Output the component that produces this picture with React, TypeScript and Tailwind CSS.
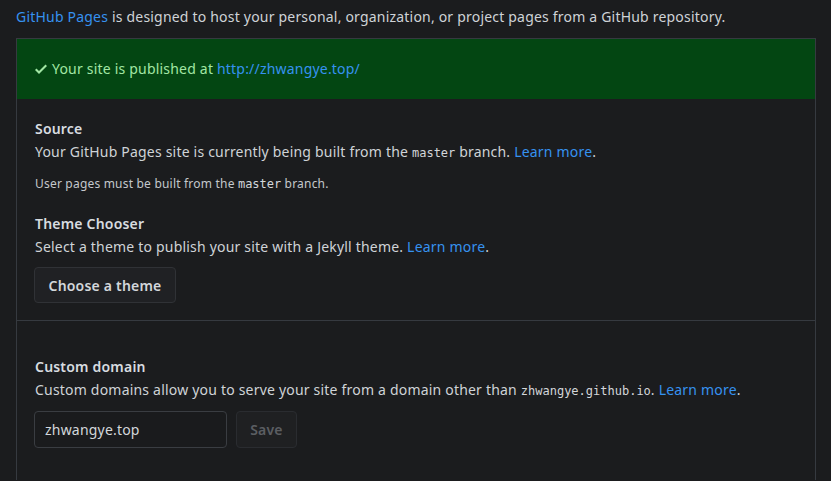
import React from "react";

const font = { fontFamily: '"Noto Sans", "Open Sans", sans-serif' };

function Code({ children }: { children: React.ReactNode }) {
  return (
    <code className="text-[12px] text-[#d3d6da] tracking-normal" style={{ fontFamily: '"DejaVu Sans Mono", "Liberation Mono", monospace' }}>
      {children}
    </code>
  );
}

function Link({ children }: { children: React.ReactNode }) {
  return <a className="text-[#3692f0]">{children}</a>;
}

export default function App() {
  return (
    <div className="w-[831px] h-[481px] overflow-hidden bg-[#1b1c1e] text-[#cfd3d7] text-[14px] tracking-[0.2px]" style={font}>
      <div className="px-4 pt-[7px]">
        <p className="leading-[20px]">
          <Link>GitHub Pages</Link> is designed to host your personal, organization, or project pages from a GitHub repository.
        </p>
        <div className="mt-[11px] w-[800px] border border-[#363a40] border-b-0">
          <div className="bg-[#034612] px-[18px] py-[20px] leading-[20px] text-[#a2e6a4] flex items-center">
            <svg width="12" height="16" viewBox="0 0 12 16" className="mr-[5px]" fill="#a2e6a4">
              <path d="M12 5l-8 8-4-4 1.5-1.5L4 10l6.5-6.5L12 5z" />
            </svg>
            <span>
              Your site is published at <Link>http://zhwangye.top/</Link>
            </span>
          </div>
          <div className="px-[18px] pt-[19px] pb-[17px] border-b border-[#363a40]">
            <h3 className="font-semibold leading-[21px] text-[#d8dce0]">Source</h3>
            <p className="mt-[2px] leading-[21px]">
              Your GitHub Pages site is currently being built from the <Code>master</Code> branch. <Link>Learn more</Link>.
            </p>
            <p className="mt-[11px] text-[12px] leading-[18px] text-[#c4c8cc]">
              User pages must be built from the <Code>master</Code> branch.
            </p>
            <h3 className="mt-[20px] font-semibold leading-[21px] text-[#d8dce0]">Theme Chooser</h3>
            <p className="mt-[2px] leading-[21px]">
              Select a theme to publish your site with a Jekyll theme. <Link>Learn more</Link>.
            </p>
            <button className="-ml-px mt-[10px] h-[36px] px-[13.5px] rounded-[4px] border border-[#303236] bg-[#202124] font-semibold text-[#d3d7db]">
              Choose a theme
            </button>
          </div>
          <div className="px-[18px] pt-[35px] pb-[32px]">
            <h3 className="font-semibold leading-[21px] text-[#d8dce0]">Custom domain</h3>
            <p className="mt-[2px] leading-[21px]">
              Custom domains allow you to serve your site from a domain other than <Code>zhwangye.github.io</Code>. <Link>Learn more</Link>.
            </p>
            <div className="-ml-px mt-[9px] flex gap-[9px]">
              <div className="w-[193px] h-[37px] rounded-[4px] border border-[#3a3d42] bg-[#1a1b1d] px-[10px] flex items-center text-[#d3d7db]">
                zhwangye.top
              </div>
              <button className="w-[61px] h-[37px] rounded-[4px] border border-[#2a2c30] bg-[#1f2022] font-semibold text-[#5b5e62]">
                Save
              </button>
            </div>
          </div>
        </div>
      </div>
    </div>
  );
}
